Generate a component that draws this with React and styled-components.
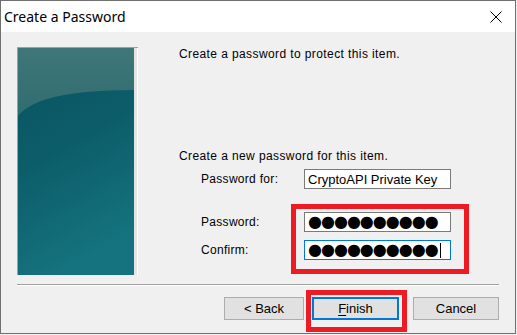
import React from 'react'
import styled, { createGlobalStyle } from 'styled-components'

const Global = createGlobalStyle`
    html, body { margin: 0; padding: 0; background: #f0f0f0; }
    * { box-sizing: border-box; }
`

function WizardArt() {
    return (
        <svg width="121" height="228" viewBox="0 0 121 228">
            <defs>
                <linearGradient id="base" x1="0" y1="0" x2="0.3" y2="1">
                    <stop offset="0" stopColor="#0a5260" />
                    <stop offset="0.5" stopColor="#0c5d6a" />
                    <stop offset="1" stopColor="#14737e" />
                </linearGradient>
                <linearGradient id="gloss" x1="0" y1="0" x2="0" y2="1">
                    <stop offset="0" stopColor="#3f7779" />
                    <stop offset="1" stopColor="#306c70" />
                </linearGradient>
            </defs>
            <rect x="0" y="0" width="121" height="228" fill="url(#base)" />
            <path d="M0 68 C 14 52 44 42 121 42 L121 0 L0 0 Z" fill="url(#gloss)" />
            <rect x="116" y="0" width="5" height="228" fill="#e4e4e4" />
            <rect x="119" y="0" width="2" height="228" fill="#ffffff" />
        </svg>
    )
}

function CloseGlyph() {
    return (
        <svg width="12" height="12" viewBox="0 0 12 12">
            <path d="M0.5 0.5 L11.5 11.5 M11.5 0.5 L0.5 11.5" stroke="#000" strokeWidth="1" fill="none" />
        </svg>
    )
}

function App() {
    return (
        <>
            <Global />
            <Window>
                <TitleBar>
                    <Title>Create a Password</Title>
                    <CloseButton><CloseGlyph /></CloseButton>
                </TitleBar>
                <Body>
                    <Main>
                        <Art><WizardArt /></Art>
                        <Content>
                            <Intro>Create a password to protect this item.</Intro>
                            <Intro top={88}>Create a new password for this item.</Intro>
                            <FieldRow top={6}>
                                <Label>Password for:</Label>
                                <Field>CryptoAPI Private Key</Field>
                            </FieldRow>
                            <FieldRow top={23}>
                                <Label>Password:</Label>
                                <Field><Dots>●●●●●●●●●●</Dots></Field>
                            </FieldRow>
                            <FieldRow top={8}>
                                <Label>Confirm:</Label>
                                <Field focused><Dots>●●●●●●●●●●</Dots><Caret /></Field>
                            </FieldRow>
                            <Highlight style={{ left: 112, top: 157, width: 178, height: 70 }} />
                        </Content>
                    </Main>
                    <Separator />
                    <Buttons>
                        <Button width={80}>&lt; Back</Button>
                        <Button width={87} primary>
                            <u>F</u>inish
                            <Highlight style={{ left: -8, top: -9, width: 101, height: 42 }} />
                        </Button>
                        <Button width={86}>Cancel</Button>
                    </Buttons>
                </Body>
            </Window>
        </>
    )
}

export default App

const Window = styled.div`
    width: 516px;
    height: 334px;
    border: 1px solid #707070;
    display: flex;
    flex-direction: column;
    background: #f0f0f0;
    font-family: "Liberation Sans", Arial, sans-serif;
    font-size: 12px;
    color: #000;
`

const TitleBar = styled.div`
    height: 31px;
    background: #fff;
    display: flex;
    align-items: center;
    justify-content: space-between;
    padding: 0 13px 0 3px;
`

const Title = styled.div`
    font-family: "Noto Sans", sans-serif;
    font-size: 14px;
    color: #000;
`

const CloseButton = styled.div`
    display: flex;
    align-items: center;
    width: 12px;
    height: 12px;
`

const Body = styled.div`
    flex: 1;
    display: flex;
    flex-direction: column;
    padding: 15px 16px 0 16px;
`

const Main = styled.div`
    display: flex;
    height: 228px;
`

const Art = styled.div`
    width: 121px;
    height: 228px;
    border-top: 1px solid #a0a0a0;
    border-left: 1px solid #a0a0a0;
    overflow: hidden;
    svg { display: block; }
`

const Content = styled.div`
    position: relative;
    flex: 1;
    margin-left: 41px;
    display: flex;
    flex-direction: column;
`

const Intro = styled.div`
    line-height: 14px;
    margin-top: ${p => p.top || 0}px;
    letter-spacing: 0.4px;
`

const FieldRow = styled.div`
    display: flex;
    align-items: center;
    margin-top: ${p => p.top}px;
    padding-left: 22px;
`

const Label = styled.div`
    width: 103px;
    letter-spacing: 0.3px;
`

const Field = styled.div`
    width: 147px;
    height: 20px;
    background: #fff;
    border: 1px solid ${p => p.focused ? '#0078d7' : '#7a7a7a'};
    display: flex;
    align-items: center;
    padding-left: 3px;
    font-size: 13px;
    white-space: nowrap;
`

const Dots = styled.span`
    font-family: "DejaVu Sans", sans-serif;
    font-size: 16px;
    line-height: 16px;
    letter-spacing: -1px;
`

const Caret = styled.span`
    width: 1px;
    height: 15px;
    margin-left: 2px;
    background: #000;
`

const Highlight = styled.div`
    position: absolute;
    border: 5px solid #ed1c24;
    pointer-events: none;
`

const Separator = styled.div`
    margin-top: 9px;
    height: 2px;
    border-top: 1px solid #a0a0a0;
    border-bottom: 1px solid #fff;
`

const Buttons = styled.div`
    display: flex;
    justify-content: flex-end;
    gap: 8px;
    margin-top: 11px;
    & > :last-child { margin-left: 6px; }
`

const Button = styled.div`
    position: relative;
    width: ${p => p.width}px;
    height: 23px;
    display: flex;
    align-items: center;
    justify-content: center;
    background: #e1e1e1;
    border: ${p => p.primary ? '2px solid #0078d7' : '1px solid #adadad'};
    font-size: 13px;
    u { text-decoration-thickness: 1px; text-underline-offset: 2px; }
`
